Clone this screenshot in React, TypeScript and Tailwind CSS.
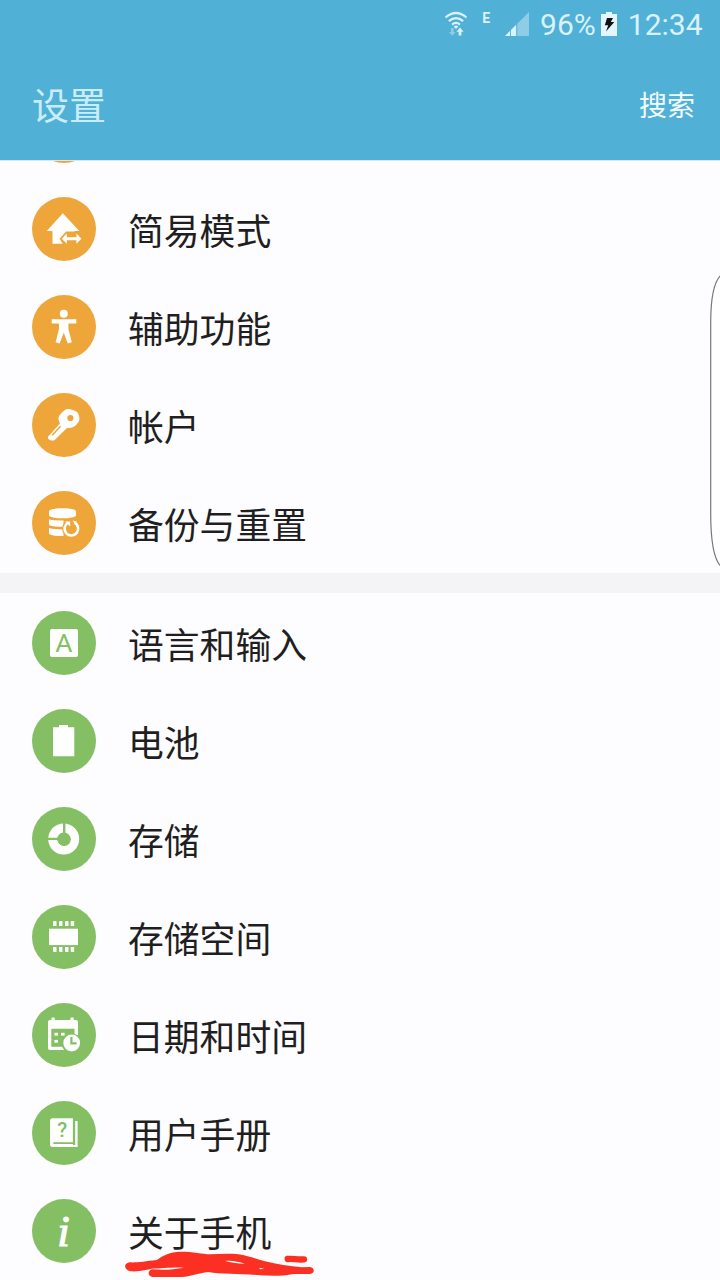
import React from "react";

type Item = { label: string; icon: React.ReactNode };

const HomeIcon = () => (
  <>
    <path d="M30.8 16.2 47.3 34H42.5V46.7H20.5V34H14.8Z" fill="#fff" />
    <path d="M27.5 41.7 34 34.5H50V48H31.5Z" fill="#eea63a" />
    <path
      d="M29.8 41.7 34.8 36.6V40.2H44.4V36.6L49.4 41.7 44.4 46.8V43.2H34.8V46.8Z"
      fill="#fff"
    />
  </>
);

const PersonIcon = () => (
  <g fill="#fff">
    <circle cx="31.8" cy="18.8" r="4" />
    <path d="M19.7 24.3H44.3V28.6H36.4V34L39.8 47.3 35.8 48.4 31.8 37.8 27.6 48.4 23.6 47.3 27 34V28.6H19.7Z" />
  </g>
);

const KeyIcon = () => (
  <>
    <path
      d="M35 16.1C38 15.8 43 17.2 45.3 19.2C46.8 20.8 47.8 25 47.3 27C46.8 29.2 44.5 31.8 42.6 33.2C41 34.6 37.6 35 35 35L22.6 46.9C21.6 47.7 20 47.8 18.4 47.2L16.6 46.2C15.8 45.4 15.7 44.2 16.4 43.3L28 30.6C27 28.4 26 26 26.6 24.1C27.6 21.8 32 16.8 35 16.1Z"
      fill="#fff"
    />
    <circle cx="38.4" cy="25" r="3.1" fill="#eea63a" />
    <path d="M28.6 33.2 20.2 42.2" stroke="#eea63a" strokeWidth="1.6" />
  </>
);

const BackupIcon = () => (
  <>
    <g fill="#fff">
      <path d="M17 20.3C17 18.4 23 17.2 30.5 17.2S44 18.4 44 20.3V24.2C44 26.1 38 27.3 30.5 27.3S17 26.1 17 24.2Z" />
      <path d="M17 28.2C20 29.3 25 29.6 31.5 29.6V35.8C24 35.8 17 35.4 17 33.2Z" />
      <path d="M17 37C20 38.1 25 38.4 31.5 38.4V45C24 45 17 44.4 17 42.2Z" />
    </g>
    <circle cx="39.3" cy="37.7" r="9.2" fill="#eea63a" />
    <path
      d="M42.6 31.7A6.8 6.8 0 1 1 35.6 32"
      fill="none"
      stroke="#fff"
      strokeWidth="2.6"
    />
    <path d="M33 30.4H38.2V35.4Z" fill="#fff" />
    <path d="M40.6 29.6 44.8 30.4 43.4 34.2Z" fill="#fff" />
  </>
);

const LanguageIcon = () => (
  <>
    <rect x="18" y="18" width="28" height="28" rx="2" fill="#fff" />
    <text
      x="32"
      y="41"
      textAnchor="middle"
      fontSize="26.5"
      fontFamily="Roboto, sans-serif"
      fill="#84bf64"
    >
      A
    </text>
  </>
);

const BatteryIcon = () => (
  <path d="M27 16H36V18.3H42.3V47.3H21V18.3H27Z" fill="#fff" />
);

const StorageIcon = () => (
  <>
    <circle cx="31.7" cy="32" r="11" fill="none" stroke="#fff" strokeWidth="9" />
    <path d="M32.2 15V31.9H15.5" fill="none" stroke="#84bf64" strokeWidth="2.4" />
    <circle cx="32.2" cy="32.3" r="6.6" fill="#84bf64" />
  </>
);

const ChipIcon = () => (
  <g fill="#fff">
    <rect x="17" y="23.7" width="29" height="16.4" />
    {[21, 27, 33, 38.7].map((x) => (
      <g key={x}>
        <path d={`M${x} 21V16.8L${x + 0.8} 16H${x + 3.5}V21Z`} />
        <path d={`M${x} 42H${x + 3.5}V47H${x + 0.8}L${x} 46.2Z`} />
      </g>
    ))}
  </g>
);

const CalendarIcon = () => (
  <>
    <g fill="#fff">
      <rect x="16" y="17" width="30" height="30" rx="2" />
      <rect x="19.4" y="14.6" width="3.4" height="4" rx="1" />
      <rect x="38.4" y="14.6" width="3.4" height="4" rx="1" />
    </g>
    <path d="M19.3 25.7H42.7V32H47V48H33L30 43.7H19.3Z" fill="#84bf64" />
    <g fill="#fff">
      <rect x="22.4" y="29.8" width="3.6" height="2.8" />
      <rect x="29" y="29.8" width="3.6" height="2.8" />
      <rect x="22.4" y="36.9" width="3.6" height="2.8" />
      <rect x="42.7" y="24" width="3.3" height="8" />
    </g>
    <circle cx="39.7" cy="40" r="9.6" fill="#84bf64" />
    <circle cx="39.7" cy="40" r="8.4" fill="#fff" />
    <path d="M39.4 34V40.4H44.6" fill="none" stroke="#84bf64" strokeWidth="2.2" />
  </>
);

const ManualIcon = () => (
  <>
    <path
      d="M20.5 17.2H41V44H43.2V20H45.6V46H20.5C19 46 18 45 18 43.5V19.7C18 18.2 19 17.2 20.5 17.2Z"
      fill="#fff"
    />
    <path d="M41.8 17V42.2H21.3" fill="none" stroke="#84bf64" strokeWidth="1.8" />
    <text
      x="30.3"
      y="36.4"
      textAnchor="middle"
      fontSize="20.5"
      fontWeight="500"
      fontFamily="Roboto, sans-serif"
      fill="#84bf64"
    >
      ?
    </text>
  </>
);

const InfoIcon = () => (
  <text
    x="31.4"
    y="46.6"
    textAnchor="middle"
    fontSize="45"
    fontStyle="italic"
    fontFamily="'Liberation Serif', serif"
    fill="#fff"
    stroke="#fff"
    strokeWidth="1.1"
  >
    i
  </text>
);

const personal: Item[] = [
  { label: "简易模式", icon: <HomeIcon /> },
  { label: "辅助功能", icon: <PersonIcon /> },
  { label: "帐户", icon: <KeyIcon /> },
  { label: "备份与重置", icon: <BackupIcon /> },
];

const system: Item[] = [
  { label: "语言和输入", icon: <LanguageIcon /> },
  { label: "电池", icon: <BatteryIcon /> },
  { label: "存储", icon: <StorageIcon /> },
  { label: "存储空间", icon: <ChipIcon /> },
  { label: "日期和时间", icon: <CalendarIcon /> },
  { label: "用户手册", icon: <ManualIcon /> },
  { label: "关于手机", icon: <InfoIcon /> },
];

const Row = ({ item, color }: { item: Item; color: string }) => (
  <li className="flex h-[98px] items-center gap-8 px-8">
    <span className={`h-16 w-16 shrink-0 rounded-full ${color}`}>
      <svg viewBox="0 0 64 64" className="h-16 w-16">
        {item.icon}
      </svg>
    </span>
    <span className="pt-0.5 text-[35.8px] leading-none text-[#1f1f21]">
      {item.label}
    </span>
  </li>
);

const StatusBar = () => (
  <div className="flex h-12 items-center justify-end pt-px pr-[17.5px] font-[Roboto,sans-serif] text-[30px] leading-none text-[#d9f2fc]">
    {/* WIFI */}
    <svg viewBox="0 0 24 26" className="mr-[14px] mb-0.5 h-[26px] w-6">
      <g fill="none" stroke="#d9f2fc" strokeWidth="2.2">
        <path d="M1.5 6.5Q12 -2.5 22.5 6.5" />
        <path d="M4.8 10.2Q12 4 19.2 10.2" />
        <path d="M8 13.6Q12 10.2 16 13.6" />
      </g>
      <path d="M9.6 15.4Q12 13.4 14.4 15.4L12 18Z" fill="#d9f2fc" />
      <path d="M7 17H9.6V21H11.6L8.3 24.8 5 21H7Z" fill="#8fcde7" />
      <path d="M16 16.6 19.6 20.8H17.4V24.4H14.6V20.8H12.4Z" fill="#d9f2fc" />
    </svg>
    <span className="mr-[14px] mb-[13px] text-[14px] font-bold">E</span>
    {/* SIGNAL */}
    <svg viewBox="0 0 26 24" className="mr-[10px] mb-0.5 h-6 w-[26px]">
      <path d="M25 0V24H1Z" fill="#8fcde7" />
      <path d="M12 13V24H1Z" fill="#d9f2fc" />
      <path d="M6.5 18V24M12.8 12V24" stroke="#51b0d6" strokeWidth="0.9" />
    </svg>
    <span className="mr-[5px]">96%</span>
    <svg viewBox="0 0 16 24" className="mr-[11px] mb-0.5 h-6 w-4">
      <path d="M5 0H11V2H16V24H0V2H5Z" fill="#e4f6fd" />
      <path d="M6 6H12L9.8 10H13.3L5 19.5 7.2 13.3H3.8Z" fill="#111" />
    </svg>
    <span>12:34</span>
  </div>
);

const App = () => {
  return (
    <div className="relative flex h-[1280px] w-[720px] flex-col overflow-hidden bg-[#fdfcff] font-['Noto_Sans_CJK_SC',sans-serif]">
      <header className="h-[160px] shrink-0 bg-[#51b0d6]">
        <StatusBar />
        <div className="flex h-28 items-center justify-between pr-[25px] pl-8">
          <h1 className="pt-px text-[37px] leading-none font-normal text-[#c9edfb]">设置</h1>
          <button className="text-[28px] leading-none text-[#f2fcff]">搜索</button>
        </div>
      </header>

      <main className="flex-1 overflow-hidden border-t border-[#dfe3ea]">
        {/* first row is scrolled under the header */}
        <ul className="-mt-[79px]">
          <li className="flex h-[98px] items-center px-8">
            <span className="h-16 w-16 rounded-full bg-[#eea63a]"></span>
          </li>
          {personal.map((item) => (
            <Row key={item.label} item={item} color="bg-[#eea63a]" />
          ))}
        </ul>
        <div className="mt-px h-5 bg-[#f4f3f6]"></div>
        <ul className="mt-px">
          {system.map((item) => (
            <Row key={item.label} item={item} color="bg-[#84bf64]" />
          ))}
        </ul>
      </main>

      {/* EDGE PANEL HANDLE */}
      <svg viewBox="0 0 10 296" className="absolute top-[273px] right-0 h-[296px] w-[10px]">
        <path
          d="M10.5 2.5C3 10 .7 28 .7 50V240C.7 262 3 285 10.5 293"
          fill="#fff"
          stroke="#77777a"
          strokeWidth="1.2"
        />
      </svg>

      {/* RED MARKER */}
      <svg viewBox="0 0 660 240" className="absolute top-[1200px] left-[110px] h-20 w-[220px]">
        <path
          d="M60 187C82 188 105 184 140 180C160 166 180 156 210 155C250 155 278 162 300 163C330 162 358 160 385 163C415 167 440 178 465 184C500 192 540 199 575 202L600 201C615 203 615 220 600 222C578 223 560 220 545 223C515 229 480 228 440 225C390 220 330 223 295 216C265 220 240 230 215 231H128C112 229 112 210 128 208C165 211 190 208 222 203C190 201 150 206 125 206C105 210 85 215 65 214C42 213 38 189 60 187Z"
          fill="#fb3023"
        />
        <path d="M345 183C365 180 385 185 405 191C385 191 362 188 345 183ZM448 203 463 206 450 208Z" fill="#fdfcff" />
        <path d="M533 177C550 175 560 180 582 178" fill="none" stroke="#fb3023" strokeWidth="19" strokeLinecap="round" />
      </svg>
    </div>
  );
};

export default App;
